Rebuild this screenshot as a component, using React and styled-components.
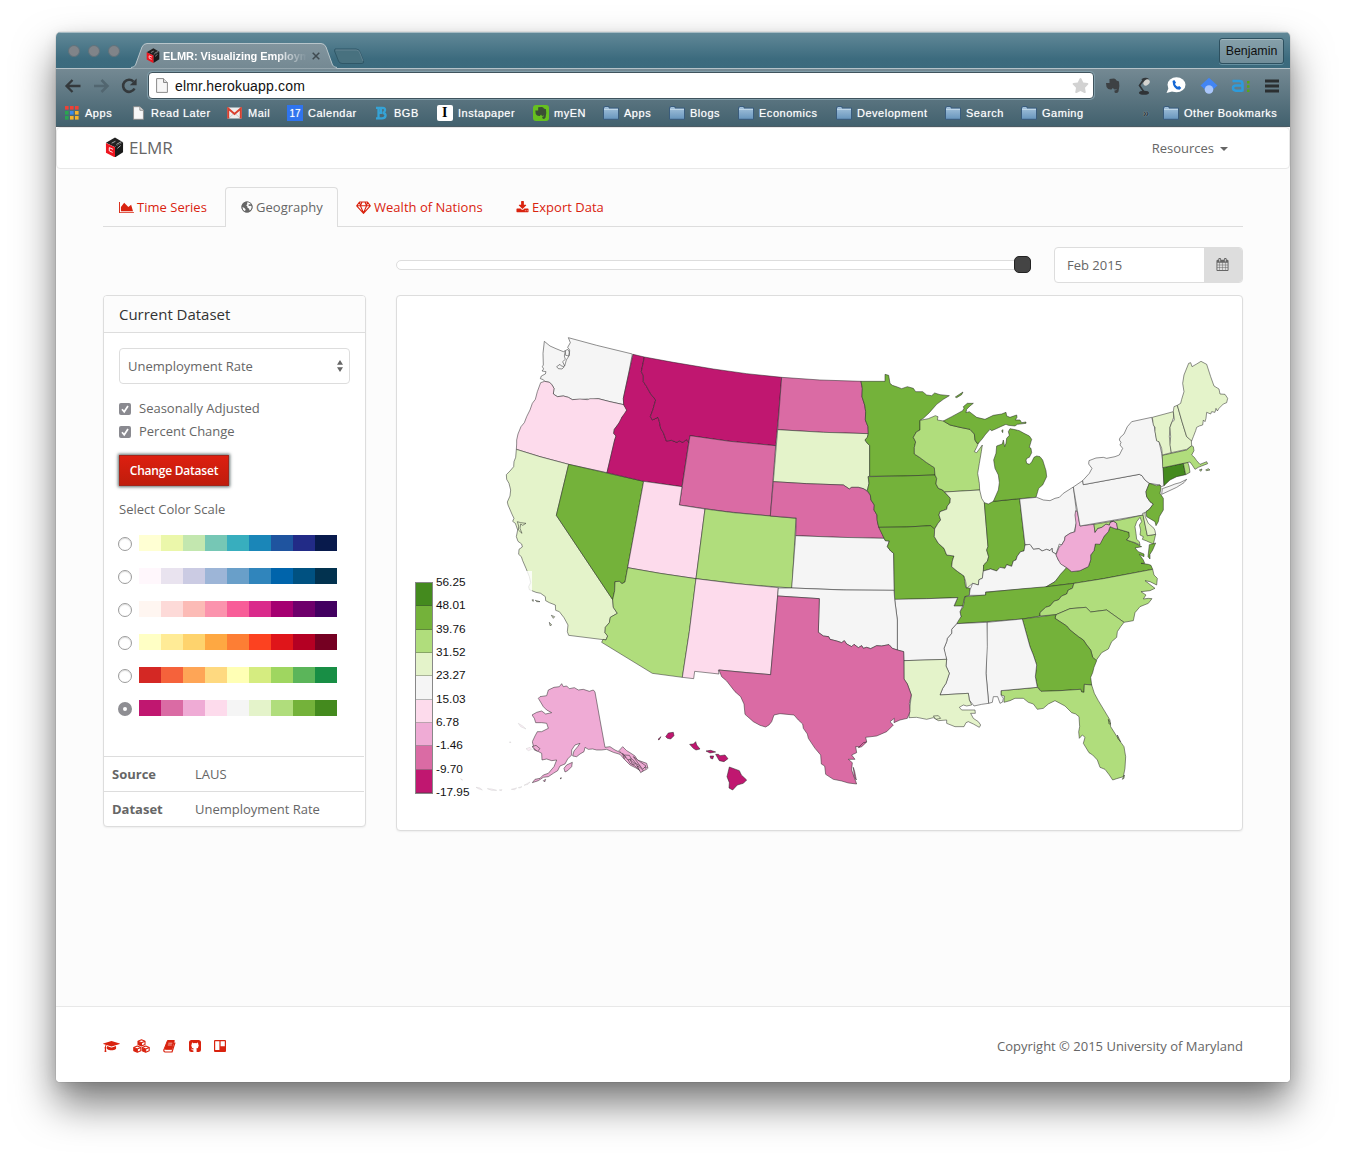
import React from "react";
import styled, { createGlobalStyle } from "styled-components";
import { FaStar } from "react-icons/fa";

const GlobalStyle = createGlobalStyle`
  *, *::before, *::after { box-sizing: border-box; }
  body { margin: 0; background: #fff; overflow: hidden; }
`;

const ui = `"Liberation Sans", Helvetica, Arial, sans-serif`;
const RED = "#d9230f";

/* ---------- window ---------- */
const Window = styled.div`
  width: 1234px;
  height: 1050px;
  margin: 32px 56px 80px;
  border-radius: 5px 5px 4px 4px;
  overflow: clip;
  display: flex;
  flex-direction: column;
  background: #fcfcfc;
  font: 13px/20px "Open Sans", "Noto Sans", sans-serif;
  color: #666;
`;
const Backdrop = styled.div`
  height: 1162px;
  overflow: hidden;
  ${Window} {
    box-shadow: 0 0 1px rgba(0, 0, 0, 0.6), 0 22px 40px rgba(0, 0, 0, 0.52), 0 4px 14px rgba(0, 0, 0, 0.1);
  }
`;
const TitleBar = styled.div`
  height: 36px;
  flex: none;
  display: flex;
  align-items: flex-end;
  padding: 0 6px 0 12px;
  background: linear-gradient(#628998, #3c6b7e 75%, #3b6a7d);
  box-shadow: inset 0 1px 0 #a7bcc4;
`;
const Lights = styled.div`
  display: flex;
  gap: 8px;
  width: 63px;
  padding-bottom: 11px;
`;
const Light = styled.span`
  width: 12px;
  height: 12px;
  border-radius: 50%;
  background: #808489;
  border: 1px solid #62727b;
`;
const Tab = styled.div`
  position: relative;
  width: 206px;
  height: 25px;
  display: flex;
  align-items: center;
  padding-left: 15px;
  font: bold 11px/14px ${ui};
  color: #fff;
`;
const TabShape = styled.svg`
  position: absolute;
  left: 0;
  top: 0;
`;
const TabTitle = styled.span`
  position: relative;
  width: 144px;
  margin-left: 3px;
  overflow: hidden;
  white-space: nowrap;
  letter-spacing: -0.05px;
  -webkit-mask-image: linear-gradient(90deg, #000 78%, transparent);
  mask-image: linear-gradient(90deg, #000 78%, transparent);
`;
const Over = styled.span`
  position: relative;
  display: flex;
`;
const NewTab = styled.svg`
  margin: 0 0 3px -5px;
`;
const Profile = styled.div`
  margin: 0 0 4px auto;
  width: 65px;
  height: 26px;
  border: 1px solid #2d505f;
  border-radius: 3px;
  background: linear-gradient(#86a0aa, #718e9a);
  box-shadow: inset 0 1px 0 #a3b8bf, 0 1px 0 #6590a1;
  color: #101010;
  text-align: center;
  font: 12.4px/25px ${ui};
`;
const Chrome = styled.div`
  height: 59px;
  flex: none;
  background: linear-gradient(#748993, #42616e);
  border-top: 1px solid #b5c2c8;
  border-bottom: 1px solid #4a5b64;
  display: flex;
  flex-direction: column;
`;
const Toolbar = styled.div`
  height: 31px;
  display: flex;
  align-items: center;
  padding: 3px 11px 0 8px;
`;
const NavIcons = styled.div`
  width: 84px;
  display: flex;
  gap: 8px;
`;
const UrlBox = styled.div`
  width: 946px;
  height: 27px;
  border: 1px solid #3f535d;
  border-radius: 4px;
  background: #fff;
  box-shadow: 0 0 0 1px #7f9ca8;
  display: flex;
  align-items: center;
  padding: 0 4px 0 7px;
  font: 14px/20px ${ui};
  color: #111;
  letter-spacing: 0.18px;
`;
const UrlText = styled.span`
  margin: 0 auto 0 7px;
`;
const Extensions = styled.div`
  flex: 1;
  display: flex;
  justify-content: space-between;
  align-items: center;
  padding-left: 11px;
`;
const Bookmarks = styled.div`
  display: flex;
  align-items: center;
  height: 27px;
  padding-left: 9px;
  font: 11px/14px ${ui};
  color: #fff;
  letter-spacing: 0.52px;
  text-shadow: 0 0 1px rgba(255, 255, 255, 0.6);
`;
const Bookmark = styled.div`
  width: ${(p) => p.$w}px;
  display: flex;
  align-items: center;
  white-space: nowrap;
`;
const BookmarkIcon = styled.span`
  width: ${(p) => p.$w}px;
  height: 17px;
  display: flex;
  align-items: center;
  flex: none;
`;
const More = styled.b`
  color: #2c3b42;
`;
const DayTile = styled.span`
  width: 16px;
  height: 16px;
  background: #2f74ee;
  color: #fff;
  text-align: center;
  font: 10px/18px ${ui};
  letter-spacing: 0;
`;
const InstaTile = styled.span`
  width: 16px;
  height: 16px;
  border-radius: 2px;
  background: #fff;
  color: #000;
  text-align: center;
  font: bold 14px/16px "Liberation Serif", serif;
  text-shadow: none;
`;

/* ---------- page ---------- */
const Navbar = styled.header`
  height: 42px;
  flex: none;
  display: flex;
  align-items: center;
  justify-content: space-between;
  padding: 0 61px 0 48px;
  background: #fff;
  border: 1px solid #e8e8e8;
  border-radius: 4px;
`;
const Brand = styled.div`
  display: flex;
  align-items: center;
  gap: 5px;
  font-size: 17px;
  letter-spacing: -0.1px;

  svg { margin-top: -2px; }
`;
const Dropdown = styled.div`
  display: flex;
  align-items: center;
  gap: 6px;
`;
const Caret = styled.span`
  margin-top: 1px;
  border: 4px solid transparent;
  border-top-color: #666;
  border-bottom: 0;
`;
const Main = styled.main`
  flex: 1;
  padding: 18px 47px 0;
`;
const Tabs = styled.nav`
  display: flex;
  height: 40px;
  border-bottom: 1px solid #ddd;
`;
const NavTab = styled.a`
  display: flex;
  align-items: center;
  gap: 3px;
  width: ${(p) => p.$w}px;
  height: ${(p) => (p.$active ? 40 : 39)}px;
  padding: 0 0 ${(p) => (p.$active ? 1 : 0)}px ${(p) => p.$pad}px;
  border: 1px solid ${(p) => (p.$active ? "#ddd" : "transparent")};
  border-bottom: 0;
  border-radius: 4px 4px 0 0;
  background: #fcfcfc;
  color: ${(p) => (p.$active ? "#666" : RED)};
  letter-spacing: 0.02px;
  white-space: nowrap;
`;
const Controls = styled.div`
  display: flex;
  align-items: center;
  justify-content: flex-end;
  height: 36px;
  margin: 20px 0 12px;
`;
const Track = styled.div`
  width: 635px;
  height: 10px;
  border: 1px solid #ddd;
  border-radius: 5px;
  background: #fff;
  display: flex;
  justify-content: flex-end;
  align-items: center;
  margin: 0 23px 1px 0;
`;
const Handle = styled.span`
  width: 17px;
  height: 17px;
  margin-right: -1px;
  border-radius: 5px;
  background: #444;
  border: 1px solid #222;
`;
const DateGroup = styled.div`
  display: flex;
  width: 189px;
  height: 36px;
  border: 1px solid #ddd;
  border-radius: 4px;
  background: #fff;
  overflow: hidden;
`;
const DateText = styled.div`
  flex: 1;
  padding: 7px 12px;
`;
const DateButton = styled.div`
  width: 38px;
  padding: 0 1px 2px 0;
  background: #ddd;
  display: flex;
  align-items: center;
  justify-content: center;
`;
const Columns = styled.div`
  display: flex;
  align-items: flex-start;
  gap: 30px;
`;
const Panel = styled.section`
  position: relative;
  width: ${(p) => p.$w}px;
  height: ${(p) => p.$h}px;
  border: 1px solid #ddd;
  border-radius: 4px;
  background: #fff;
  box-shadow: 0 1px 2px rgba(0, 0, 0, 0.06);
  overflow: hidden;
`;
const PanelHead = styled.h3`
  margin: 0;
  height: 37px;
  padding: 8px 15px;
  background: #fcfcfc;
  border-bottom: 1px solid #ddd;
  color: #333;
  font-weight: 400;
  font-size: 15px;
  letter-spacing: -0.02px;
`;
const PanelBody = styled.div`
  height: 423px;
  padding: 15px;
`;
const Select = styled.div`
  height: 36px;
  border: 1px solid #ddd;
  border-radius: 4px;
  display: flex;
  align-items: center;
  justify-content: space-between;
  padding: 0 5px 0 8px;
  margin-bottom: 12px;
`;
const Check = styled.div`
  height: 23px;
  display: flex;
  align-items: center;
  gap: 8px;

  svg { margin-top: 2px; }
`;
const Button = styled.button`
  display: block;
  width: 110px;
  height: 31px;
  margin: 13px 0 13px;
  padding: 0;
  border: 1px solid #a3251a;
  background: linear-gradient(#dd1f10, #bf1d0c);
  box-shadow: 0 0 3px 1px rgba(40, 60, 60, 0.75);
  color: #fff;
  font: 600 12px/26px "Open Sans", sans-serif;
  letter-spacing: -0.22px;
`;
const ScaleRow = styled.div`
  height: 33px;
  display: flex;
  align-items: center;
  gap: 7px;
  margin-left: -1px;
`;
const Scales = styled.div`
  margin-top: 8px;
`;
const Radio = styled.span`
  width: 14px;
  height: 14px;
  margin-top: 1px;
  border-radius: 50%;
  border: ${(p) => (p.$on ? "5px solid #8e8e93" : "1px solid #9c9c9c")};
  background: #fff;
  box-shadow: ${(p) => (p.$on ? "none" : "inset 0 1px 1px #ddd")};
`;
const Ramp = styled.div`
  display: grid;
  grid-template-columns: repeat(9, 22px);
  height: 16px;
  margin-top: -1px;
`;
const Swatch = styled.span`
  background: ${(p) => p.$c};
`;
const MetaRow = styled.div`
  height: 35px;
  margin-right: 1px;
  display: grid;
  grid-template-columns: 83px 1fr;
  padding: 7px 8px;
  border-top: 1px solid #ddd;
`;
const MetaKey = styled.b`
  font-weight: 700;
`;
const Legend = styled.div`
  position: absolute;
  left: 16px;
  top: 275px;
  width: 119px;
  height: 239px;
  padding: 11px 0 0 2px;
  display: flex;
  gap: 3px;
  background: rgba(255, 255, 255, 0.8);
`;
const LegendBar = styled.div`
  width: 18px;
  height: 212px;
  border: 1px solid #888;
  display: grid;
  grid-template-rows: repeat(9, 1fr);
`;
const LegendCell = styled.span`
  background: ${(p) => p.$c};
  border-bottom: 1px solid rgba(60, 60, 60, 0.35);
`;
const LegendLabels = styled.div`
  display: flex;
  flex-direction: column;
  justify-content: space-between;
  height: 223px;
  margin-top: -6px;
  font: 11.800px/13px ${ui};
  color: #111;
`;
const Footer = styled.footer`
  flex: none;
  height: 76px;
  border-top: 1px solid #e8e8e8;
  background: #fff;
  display: flex;
  align-items: center;
  justify-content: space-between;
  padding: 3px 47px 0;
`;
const Links = styled.div`
  display: flex;
  align-items: center;
  gap: 13px;
  color: ${RED};
`;

/* ---------- icons ---------- */
const Glyph = ({ w, h = 13, box, d }) => (
  <svg width={w} height={h} viewBox={box} fill="currentColor"><path d={d} /></svg>
);
const AreaChart = () => (
  <Glyph w={15} box="0 0 2048 1792" d="M2048 1536v128h-2048v-1536h128v1408h1920zm-384-1024l256 896h-1664v-576l448-576 576 576z" />
);
const Download = () => (
  <Glyph w={13} box="0 0 1792 1792" d="M1344 1344q0-26-19-45t-45-19-45 19-19 45 19 45 45 19 45-19 19-45zm256 0q0-26-19-45t-45-19-45 19-19 45 19 45 45 19 45-19 19-45zm128-224v320q0 40-28 68t-68 28h-1472q-40 0-68-28t-28-68v-320q0-40 28-68t68-28h465l135 136q58 56 136 56t136-56l136-136h464q40 0 68 28t28 68zm-325-569q17 41-14 70l-448 448q-18 19-45 19t-45-19l-448-448q-31-29-14-70 17-39 59-39h256v-448q0-26 19-45t45-19h256q26 0 45 19t19 45v448h256q42 0 59 39z" />
);
const GradCap = () => (
  <Glyph w={17} box="0 0 2304 1792" d="M1774 836l18 316q4 69-82 128t-235 93.500-323 34.500-323-34.500-235-93.500-82-128l18-316 574 181q22 7 48 7t48-7zm530-324q0 23-22 31l-1120 352q-4 1-10 1t-10-1l-652-206q-43 34-71 111.500t-34 178.500q63 36 63 109 0 69-58 107l58 433q2 14-8 25-9 11-24 11h-192q-15 0-24-11-10-11-8-25l58-433q-58-38-58-107 0-73 65-111 11-207 98-330l-333-104q-22-8-22-31t22-31l1120-352q4-1 10-1t10 1l1120 352q22 8 22 31z" />
);
const Calendar = () => (
  <Glyph w={13} box="0 0 1792 1792" d="M192 1664h288v-288h-288v288zm352 0h320v-288h-320v288zm-352-352h288v-320h-288v320zm352 0h320v-320h-320v320zm-352-384h288v-288h-288v288zm736 736h320v-288h-320v288zm-384-736h320v-288h-320v288zm768 736h288v-288h-288v288zm-384-352h320v-320h-320v320zm-352-864v-288q0-13-9.500-22.500t-22.500-9.500h-64q-13 0-22.500 9.500t-9.500 22.500v288q0 13 9.500 22.500t22.500 9.500h64q13 0 22.500-9.500t9.500-22.500zm736 864h288v-320h-288v320zm-384-384h320v-288h-320v288zm384 0h288v-288h-288v288zm32-480v-288q0-13-9.500-22.500t-22.500-9.500h-64q-13 0-22.500 9.500t-9.500 22.500v288q0 13 9.500 22.500t22.500 9.500h64q13 0 22.500-9.500t9.500-22.500zm384-64v1280q0 52-38 90t-90 38h-1408q-52 0-90-38t-38-90v-1280q0-52 38-90t90-38h128v-96q0-66 47-113t113-47h64q66 0 113 47t47 113v96h384v-96q0-66 47-113t113-47h64q66 0 113 47t47 113v96h128q52 0 90 38t38 90z" />
);
const Globe = () => (
  <svg width="12" height="12" viewBox="0 0 12 12">
    <circle cx="6" cy="6" r="5.500" fill="#666" />
    <path d="M6 1.200 7.500 .9 9.800 2.300 9.500 3.500 8 3.200 7.200 4.200 8.500 5 10.200 4.800 11 6 10 8.500 8.600 9.600 8 7.500 6.500 6.800 6.300 5.200 5.200 4.300 6.300 3.200Z" fill="#fcfcfc" />
    <path d="M1.200 6 3 6.800 4.600 8.200 4 10.300 2.200 9Z" fill="#fcfcfc" />
    <circle cx="6" cy="6" r="5.200" fill="none" stroke="#666" strokeWidth=".8" />
  </svg>
);
const Diamond = () => (
  <svg width="15" height="13" viewBox="0 0 15 13" fill="none" stroke={RED} strokeWidth="1.100" strokeLinejoin="round">
    <path d="M3.500 1h8L14.300 4.800 7.500 12.300.7 4.800ZM.7 4.800h13.600M7.500 12 4.400 4.800 6 1M7.500 12l3.100-7.200L9 1M3.300 1.200l1.300 3.400M11.700 1.200l-1.300 3.400" />
  </svg>
);
const Cubes = () => (
  <svg width="17" height="14" viewBox="0 0 17 14" stroke={RED} strokeWidth="1.100" strokeLinejoin="round">
    {[[8.500, 0.7], [4.300, 7], [12.700, 7]].map(([x, y]) => (
      <g key={x} transform={`translate(${x} ${y})`}>
        <path d="M0 0 3.500 1.500V4.700L0 6.300-3.500 4.700V1.500Z" fill="#fff" />
        <path d="M-3.500 1.800 0 3.300V6.300L-3.500 4.700Z" fill={RED} stroke="none" />
        <path d="M-3.500 1.500 0 3 3.500 1.500M0 3V6" fill="none" />
      </g>
    ))}
  </svg>
);
const Book = () => (
  <svg width="13" height="13" viewBox="0 0 13 13">
    <path d="M4.500.5h6.800L8.900 9.300H2.400Q.9 9.500 1.300 8.600Z" fill={RED} stroke={RED} strokeLinejoin="round" />
    <path d="M1 9.200Q.3 12 2.300 12H9L12 2.500" fill="none" stroke={RED} strokeWidth="1.200" strokeLinejoin="round" />
    <path d="M5.300 3.200h4M4.800 5h4" stroke="#fff" strokeWidth=".6" />
  </svg>
);
const GithubSquare = () => (
  <svg width="12" height="12" viewBox="0 0 12 12">
    <path d="M2.500 0H9.500Q12 0 12 2.500V9.500Q12 12 9.500 12H7.600V9.700Q7.600 8.900 7.200 8.600 9.700 8.200 9.700 5.600 9.700 4.700 9.100 4.100 9.300 3.200 9 2.600 8.300 2.600 7.500 3.200 6 2.900 4.500 3.200 3.700 2.600 3 2.600 2.700 3.200 2.900 4.100 2.300 4.700 2.300 5.600 2.300 8.200 4.800 8.600 4.500 8.900 4.400 9.400 3.300 9.700 2.700 8.800L2 8.600Q3 10.700 4.400 10.500V12H2.500Q0 12 0 9.500V2.500Q0 0 2.500 0Z" fill={RED} />
  </svg>
);
const Trello = () => (
  <svg width="12" height="12" viewBox="0 0 12 12">
    <rect width="12" height="12" rx="1" fill={RED} />
    <path d="M1.200 1.200H5.400V10H1.200ZM6.600 1.200h4.200v5H6.600Z" fill="#fff" />
  </svg>
);
const Cube = ({ s }) => (
  <svg width={s} height={s * 1.1} viewBox="0 0 20 22">
    <path d="M10.500.5 19 5.500 10 10.500 1 6Z" fill="#222" />
    <path d="M19 5.500V16L10.500 21.500V10.300Z" fill="#1a1a1a" />
    <path d="M1 6.200 10.500 10.700V21.500L1 16.500Z" fill="#ee1620" />
    <path d="M7 6.500 11 4.500M12 7.800 17.500 4.800M13 12 16.500 9" stroke="#bbb" strokeWidth=".9" fill="none" />
    <path d="M8.500 13 4.500 11.200V14.500L8 16.200" stroke="#fff" strokeWidth="1" fill="none" />
  </svg>
);
const PageIcon = ({ w = 12, h = 15 }) => (
  <svg width={w} height={h} viewBox="0 0 12 15">
    <path d="M.6.600H7.500L11.400 4.500V14.400H.6Z" fill="#f7f7f7" stroke="#8b8b8b" />
    <path d="M7.500.600V4.500H11.400" fill="#ddd" stroke="#8b8b8b" />
  </svg>
);
const Folder = () => (
  <svg width="16" height="14" viewBox="0 0 16 14">
    <defs>
      <linearGradient id="folder" x2="0" y2="1"><stop stopColor="#a6c4dc" /><stop offset="1" stopColor="#6795bd" /></linearGradient>
    </defs>
    <path d="M.5 13.300V1.200H1.500V.5H6V2H15.500V13.300Z" fill="url(#folder)" stroke="#3a5c7c" />
    <path d="M1 3.500H15" stroke="#bdd5e6" />
  </svg>
);
const AppsGrid = () => (
  <svg width="14" height="14" viewBox="0 0 14 14">
    {["#ef4136", "#ef4136", "#ef4136", "#2aa551", "#3b8bea", "#f6b42c", "#2aa551", "#f6b42c", "#f6b42c"].map((c, i) => (
      <rect key={i} x={(i % 3) * 5} y={Math.floor(i / 3) * 5} width="3.600" height="3.600" fill={c} />
    ))}
  </svg>
);
const Gmail = () => (
  <svg width="15" height="12" viewBox="0 0 15 12">
    <rect x=".5" y=".5" width="14" height="11" fill="#eee" />
    <path d="M2 11 7.500 6 13 11" stroke="#ccc" fill="none" />
    <path d="M1.200 11.500V1.500L7.500 7 13.800 1.500V11.500" stroke="#d9402f" strokeWidth="2" fill="none" />
  </svg>
);
const BIcon = () => (
  <svg width="13" height="14" viewBox="0 0 13 14">
    <path d="M1 1.800H7.500Q10.500 2 10 4.500 9.700 6.300 7.800 6.800 11 7.500 10.500 10 10 12.300 7 12.300H1M3.500 2V12M6 1.500V6.800H3.500" fill="none" stroke="#35a3d6" strokeWidth="2.300" />
  </svg>
);
const elephant = "M4.500 1 9 .5Q11 1 11.500 2.500L14 3.500Q15 8 13.500 13.500 12.500 15.500 10.500 15 9 14.500 9.500 12.500L11.500 12V11Q8.500 12.500 8 9.800L6.500 11.500Q3 12 1.500 9L1 5H4.500Z";
const Evernote = () => (
  <svg width="16" height="16" viewBox="0 0 16 16">
    <rect width="16" height="16" rx="3" fill="#66c01f" />
    <path d={elephant} fill="#3b4e35" transform="translate(1.500 1.500) scale(.82)" />
  </svg>
);

/* ---------- map ---------- */
const T = ["#c01770", "#da6ba4", "#efabd5", "#fddbec", "#f5f5f5", "#e4f3ca", "#b0dd7c", "#74b23a", "#448a1e"];
// Each sheet is a third-pixel grid anchored at a corner of the drawing.
const SHEETS = { west: [500, 320], mid: [780, 360], east: [1020, 340], south: [700, 580], outer: [400, 560] };
const STATES = [
  ["west", 4, "205,53 290,76 397,102 388,150 370,235 371,254 330,245 295,236 270,240 262,237 240,239 217,239 205,232 190,228 172,230 160,222 162,205 155,193 148,187 134,184 130,179 121,176 124,168 136,162 138,155 126,153 131,147 127,140 130,135 129,100 133,64 150,78 168,86 190,95 196,92 193,108 196,118 188,125 194,138 199,120 208,106 209,90 203,82 211,68"],
  ["west", 4, "170,140 180,133 184,138 193,140 186,147 175,146"],
  ["west", 4, "196,92 203,88 208,96 206,108 197,106"],
  ["west", 3, "122,188 134,184 148,187 155,193 162,205 160,222 172,230 190,228 205,232 217,239 240,237 262,239 270,236 295,236 330,245 371,254 380,268 377,283 366,291 363,303 355,312 343,328 341,340 348,348 344,360 321,458 206,433 120,410 49,388 50,372 50,360 54,342 63,320 73,308 80,290 90,270 97,250 106,238 112,215"],
  ["west", 5, "49,388 120,410 206,433 169,586 338,839 340,862 352,880 331,892 328,908 316,922 315,938 323,948 318,960 206,946 202,935 204,915 192,893 178,875 167,871 166,855 148,848 137,842 136,830 122,820 108,817 88,809 86,800 92,788 88,770 78,745 68,722 64,710 56,703 57,688 67,681 65,672 54,664 49,650 53,630 46,610 38,604 42,595 37,585 24,555 22,546 30,528 32,510 27,490 20,478 19,464 30,453 41,440 42,425 47,412"],
  ["west", 5, "52,605 62,608 78,610 68,616 62,612 60,625 66,640 55,630 56,618"],
  ["outer", 5, "394,120 400,119 400,124"], ["outer", 5, "406,121 420,125 410,125"], ["outer", 5, "454,166 464,170 460,175"], ["outer", 5, "448,187 455,195 450,197"],
  ["west", 7, "206,433 320,459 431,484 383,743 375,786 366,791 358,784 345,785 344,812 338,839 169,586"],
  ["west", 0, "399,103 433,111 424,155 430,167 430,185 440,200 451,220 467,240 459,268 451,290 457,300 474,292 478,305 482,325 490,338 499,363 515,361 530,367 538,363 548,367 560,359 566,368 546,500 431,484 321,458 344,360 348,348 341,340 343,328 355,312 366,291 380,271 371,254 370,235"],
  ["west", 0, "433,111 520,127 640,147 740,161 845,172 837,270 827,377 690,364 570,347 566,368 560,359 548,367 538,363 530,367 515,361 499,363 490,338 482,325 478,305 474,292 457,300 451,290 459,268 467,240 451,220 440,200 430,185 430,167 424,155"],
  ["west", 1, "570,347 690,364 827,377 811,588 680,575 538,555"],
  ["west", 3, "431,484 546,500 538,555 615,567 588,776 480,760 383,743"],
  ["west", 6, "615,567 700,578 811,588 888,595 876,804 740,794 588,776"],
  ["west", 6, "383,743 480,760 588,776 568,935 547,1072 457,1060 305,967 309,958 318,960 323,948 315,938 316,922 328,908 331,892 352,880 340,862 338,839 344,812 345,785 358,784 366,791 375,786"],
  ["west", 3, "588,776 700,790 835,803 812,1064 655,1050 657,1062 584,1054 581,1076 547,1072 568,935"],
  ["mid", 1, "5,52 120,60 243,64 247,85 246,110 254,135 257,155 256,180 264,200 265,221 130,217 -7,209"],
  ["mid", 5, "-7,209 130,217 265,221 262,232 255,240 262,250 269,256 269,348 264,350 267,370 262,392 250,386 235,382 215,382 208,387 190,375 80,371 -20,365"],
  ["mid", 1, "-20,365 80,371 190,375 208,387 215,382 235,382 250,386 262,394 271,405 273,420 283,435 282,450 291,465 293,490 302,510 312,535 180,532 47,527 49,474 -29,468"],
  ["mid", 4, "47,527 180,532 312,535 316,542 328,543 322,560 332,573 341,580 343,691 200,690 35,684"],
  ["mid", 7, "243,64 315,64 315,43 326,46 330,70 337,76 352,81 365,86 382,80 400,85 407,95 428,95 440,105 455,107 464,99 480,104 508,107 490,118 470,133 448,158 430,175 420,181 420,210 409,216 400,232 407,246 403,262 403,282 420,293 440,308 463,323 465,345 370,348 269,349 269,256 262,250 255,240 262,232 265,221 264,200 256,180 257,155 254,135 246,110 247,85"],
  ["mid", 7, "526,111 549,96 545,104 530,113"],
  ["mid", 7, "265,350 370,348 465,345 470,355 468,372 475,385 488,390 494,397 511,415 510,428 502,438 500,448 480,455 477,465 482,480 474,490 468,500 462,507 452,497 380,501 296,502 291,480 291,465 282,450 283,435 273,420 271,405 262,392 267,370"],
  ["mid", 7, "296,502 380,501 452,497 464,507 463,530 475,550 492,565 500,585 522,588 517,603 515,620 532,634 552,648 557,682 570,685 568,706 554,710 548,738 522,740 527,728 533,713 440,716 344,719 343,691 341,580 332,573 322,560 328,543 316,542"],
  ["mid", 6, "420,181 445,176 466,167 474,170 472,180 490,183 510,195 540,202 570,208 583,222 585,240 591,250 597,245 590,262 583,275 590,278 607,255 604,275 598,310 593,340 598,370 599,390 494,396 488,390 475,385 468,372 470,355 465,345 463,323 440,308 420,293 403,282 403,262 407,246 400,232 409,216 420,210"],
  ["mid", 5, "494,396 599,390 605,415 613,428 619,500 624,560 620,570 626,590 622,604 611,615 610,635 607,655 597,659 595,675 578,670 560,685 557,665 552,648 532,634 515,620 517,603 522,588 500,585 492,565 475,550 463,530 464,507 474,490 482,480 477,465 480,455 500,448 502,438 510,428 511,415"],
  ["mid", 7, "613,428 625,432 640,424 719,416 735,557 732,573 722,575 712,588 708,600 700,603 695,619 680,614 675,625 660,622 650,633 632,627 610,633 611,615 622,604 626,590 620,570 624,560 619,500"],
  ["mid", 7, "640,424 719,416 768,412 776,385 788,375 800,350 798,332 788,300 780,290 770,288 762,292 755,306 748,313 740,310 738,300 742,294 748,292 755,278 753,265 748,262 755,238 748,228 732,220 718,212 700,208 690,206 685,215 688,226 680,235 678,250 674,260 670,240 667,252 650,258 648,280 641,300 645,325 655,345 658,368 655,390"],
  ["mid", 7, "490,183 515,170 548,152 552,145 550,140 562,130 580,130 570,138 560,148 558,158 568,155 590,172 615,178 640,166 665,162 678,157 680,168 690,172 710,165 711,172 706,180 720,180 725,188 738,186 738,190 712,193 705,198 685,196 678,193 662,200 645,208 635,212 630,208 615,225 608,235 595,250 591,250 585,240 583,222 570,208 540,202 510,195"],
  ["mid", 7, "665,212 669,209 668,218"],
  ["east", 4, "-1,477 50,472 70,480 90,482 105,475 118,472 130,460 160,441 169,512 170,545 165,565 162,577 150,580 135,590 134,600 125,615 118,612 108,642 97,636 96,625 90,632 80,628 68,633 57,626 40,628 33,617 15,613"],
  ["mid", 4, "735,555 750,553 760,568 777,566 786,573 800,568 810,572 816,565 817,576 828,582 835,600 848,615 860,623 843,645 825,665 797,682 617,696 617,706 568,706 570,690 578,670 595,675 597,659 607,655 610,633 632,627 650,633 660,622 675,625 680,614 695,619 700,603 708,600 712,588 722,575 732,573"],
  ["east", 7, "77,741 105,725 122,702 140,683 155,695 180,692 205,680 212,660 212,645 222,632 226,612 240,605 253,588 265,575 270,560 285,566 293,567 303,570 327,577 328,590 320,600 335,605 350,612 365,620 345,624 355,635 372,642 372,650 358,643 370,660 374,670 363,670 385,673 393,676 398,688 250,716 162,730"],
  ["east", 7, "388,614 407,609 398,630 390,643 390,657 384,650"],
  ["east", 2, "167,512 172,515 180,558 222,553 225,577 233,565 245,562 258,552 268,555 270,547 280,543 290,550 293,567 285,566 270,560 265,575 253,588 240,613 226,612 222,632 212,645 212,660 205,680 180,692 155,695 140,683 122,672 115,660 108,645 118,620 125,615 134,600 135,590 150,580 165,575 168,550 165,525"],
  ["east", 4, "160,441 188,422 190,434 358,403 366,407 375,420 388,430 378,455 380,470 390,485 400,492 388,508 378,515 370,525 180,558"],
  ["east", 4, "188,422 208,400 216,385 206,372 207,362 228,354 250,352 260,355 285,350 298,345 308,325 300,315 303,307 298,300 300,293 312,282 322,260 335,245 395,232 403,260 410,300 417,305 425,340 430,380 432,437 424,440 420,435 388,430 375,420 366,407 358,403 190,434"],
  ["east", 4, "427,446 450,438 465,432 480,428 500,418 492,428 470,442 425,463"],
  ["east", 7, "388,430 410,437 420,435 423,445 420,460 430,475 430,510 418,530 415,545 408,557 405,545 380,530 378,515 388,508 400,492 390,485 380,470 378,455"],
  ["east", 8, "429,383 490,370 497,404 470,410 450,420 432,437"],
  ["east", 6, "490,370 503,367 507,378 510,397 497,404"],
  ["east", 6, "427,346 500,330 515,317 520,320 522,332 515,345 523,352 530,362 540,373 560,365 563,371 545,378 535,382 525,388 518,377 510,366 490,370 428,383"],
  ["east", 6, "538,390 546,387 543,394"], ["east", 6, "557,390 565,386 570,390 560,392"],
  ["east", 5, "397,232 460,215 461,232 455,248 450,262 448,290 454,338 427,345 425,325 417,305 410,303 405,275 405,262 400,255"],
  ["east", 5, "460,215 462,200 472,196 486,245 500,290 514,300 515,317 500,328 454,338 450,315 452,290 450,262 455,248 463,240"],
  ["east", 5, "472,196 482,190 485,178 492,155 488,130 492,105 506,70 512,68 516,80 530,72 543,64 560,73 572,110 582,138 597,147 600,162 615,163 623,175 620,188 610,192 597,205 592,213 588,205 585,217 575,215 572,222 560,217 558,235 555,245 550,240 548,255 538,258 530,262 527,272 520,290 515,303 500,290 486,245"],
  ["east", 6, "222,553 300,540 370,525 382,587 407,583 403,600 400,612 380,603 367,598 370,590 360,585 362,570 358,555 365,545 360,532 350,545 345,560 348,580 350,598 358,605 360,615 345,608 335,605 320,600 328,590 327,577 303,570 293,567 290,550 280,543 270,547 268,555 258,552 245,562 233,565 225,577"],
  ["east", 5, "368,520 375,518 376,530 385,550 402,565 405,572 407,583 382,587"],
  ["south", 7, "795,50 857,45 857,37 960,27 1040,20 1122,10 1117,25 1105,30 1100,42 1085,48 1075,60 1063,63 1050,78 1037,82 1020,98 1020,108 967,117 860,125 770,131 775,118 783,110 780,95 790,80"],
  ["south", 6, "1122,10 1210,-4 1358,-32 1362,-15 1372,-5 1370,15 1350,5 1335,2 1365,25 1350,32 1323,35 1338,45 1330,57 1345,55 1356,56 1345,70 1320,80 1305,98 1300,122 1272,127 1220,90 1172,96 1158,82 1110,86 1068,104 1020,108 1020,98 1037,82 1050,78 1063,63 1075,60 1085,48 1100,42 1105,30 1117,25"],
  ["south", 6, "1068,104 1110,86 1158,82 1172,96 1220,90 1272,127 1262,140 1252,155 1250,172 1235,185 1225,207 1205,218 1188,242 1178,232 1172,210 1160,195 1150,180 1135,170 1110,150 1100,138 1080,125 1065,115"],
  ["south", 7, "967,117 1068,104 1065,115 1080,125 1100,138 1110,150 1135,170 1150,180 1160,195 1172,210 1178,232 1190,242 1182,262 1178,278 1172,292 1175,315 1153,313 1152,337 1145,336 1142,328 1080,332 1023,334 1012,320 1006,290 1010,255 1000,225 990,200"],
  ["south", 6, "1012,322 1023,334 1080,332 1142,328 1145,336 1152,337 1153,313 1175,315 1183,340 1195,362 1230,420 1232,440 1256,478 1272,500 1277,530 1275,565 1270,590 1250,596 1238,600 1228,585 1215,568 1200,562 1192,540 1178,525 1167,518 1150,490 1155,472 1147,465 1138,475 1136,455 1139,440 1137,410 1127,402 1115,398 1095,378 1065,362 1045,372 1030,385 1012,388 1000,372 985,367 970,355 945,355 930,362 912,367 913,348 903,345 903,332"],
  ["south", 6, "1225,418 1232,432 1227,432"], ["south", 6, "1252,465 1262,485 1255,478"], ["south", 6, "1267,598 1273,585 1272,595"],
  ["south", 4, "861,127 967,117 990,200 1000,225 1010,255 1006,290 1012,322 903,332 903,345 910,355 908,366 900,370 893,350 880,350 877,367 866,370 858,280"],
  ["south", 4, "770,131 861,127 862,200 858,280 866,370 845,373 822,378 808,360 805,340 720,345 728,325 738,310 748,280 738,258 740,238 735,222 732,205 740,185 742,175 755,160 755,148"],
  ["south", 4, "584,58 680,56 773,53 762,78 788,78 780,95 783,110 770,131 755,148 755,160 742,175 740,185 732,205 740,238 612,242 611,215 592,210 592,120"],
  ["south", 5, "612,242 740,238 738,258 748,280 738,310 728,325 720,345 805,340 808,360 815,375 800,378 790,375 778,382 785,390 805,390 825,390 826,400 812,400 820,415 835,425 842,435 838,442 820,432 805,425 798,428 792,440 765,440 740,430 740,420 715,422 700,413 680,418 650,412 627,413 630,380 634,345 622,312 612,297"],
  ["south", 5, "700,408 715,407 722,415 708,418"],
  ["south", 4, "235,24 275,24 430,30 582,31 584,58 592,120 592,210 577,205 567,194 545,198 530,197 512,206 500,202 490,205 485,197 475,203 462,193 455,200 440,192 433,182 425,188 410,183 390,178 386,170 370,168 355,157 358,56 233,48"],
  ["south", 1, "233,48 358,56 355,157 370,168 386,170 390,178 410,183 425,188 433,182 440,192 455,200 462,193 475,203 485,197 490,205 500,202 512,206 530,197 545,198 567,194 577,205 592,210 611,215 612,297 622,312 634,345 628,370 630,395 622,415 600,420 582,428 583,415 570,425 580,435 560,455 530,468 497,472 500,485 480,500 467,500 470,518 455,525 465,538 445,538 457,548 455,570 462,590 470,612 445,609 425,603 400,598 377,583 374,558 364,552 362,525 345,505 325,475 322,462 310,445 308,432 295,420 282,405 240,401 222,405 215,425 207,435 197,441 180,436 160,425 135,403 132,372 122,350 105,335 80,303 65,290 57,270 140,278 212,284"],
  ["south", 1, "460,562 464,575 469,600 463,590"], ["south", 1, "475,503 490,488 500,486 485,500"],
  ["outer", 2, "485,371 490,380 500,378 508,386 523,383 535,390 550,388 568,394 580,390 585,396 600,480 615,562 630,560 645,570 660,577 680,585 695,600 718,612 730,618 740,628 725,635 708,624 690,615 675,600 660,583 640,577 620,568 605,570 590,570 578,567 565,568 555,562 552,575 540,582 530,590 518,588 522,573 533,560 540,550 525,555 515,570 515,585 503,597 495,612 480,618 473,632 460,640 445,650 430,652 415,662 397,668 405,658 420,655 430,645 445,640 462,620 470,600 455,602 440,597 426,600 425,580 412,573 403,570 397,545 405,528 412,515 425,515 445,505 440,490 425,488 407,488 403,475 396,465 410,457 425,453 437,462 455,458 440,450 430,440 415,415 420,410 440,407 445,390 462,382 478,380"],
  ["outer", 2, "657,572 668,560 680,572 690,578 705,588 712,600 740,610 744,625 730,620 715,615 700,605 690,600 675,590"],
  ["outer", 2, "680,590 700,600 720,632 705,618 690,610"], ["outer", 2, "700,590 716,612 728,628 738,618 720,605"], ["outer", 2, "672,585 684,600 694,596 688,586"],
  ["outer", 2, "668,580 676,592 672,596"], ["outer", 2, "690,598 704,612 698,614"], ["outer", 2, "712,618 722,638 730,632 720,622"], ["outer", 2, "396,560 408,556 420,566 412,574"],
  ["outer", 2, "492,625 500,615 517,607 515,620 503,632 495,636"], ["outer", 2, "480,655 484,653 483,657"], ["outer", 2, "430,662 437,658 434,666"],
  ["outer", 2, "355,490 368,498 378,507 362,500"], ["outer", 2, "378,566 390,562 395,568 385,572"], ["outer", 2, "328,546 333,546 331,549"],
  ["outer", 2, "355,683 366,680 360,684"], ["outer", 2, "334,688 350,684 344,689"], ["outer", 2, "372,676 390,666 384,673"], ["outer", 2, "228,682 240,684 247,690 235,686"], ["outer", 2, "262,686 275,687 290,691 275,691"], ["outer", 2, "298,690 306,689 304,692"], ["outer", 2, "182,656 188,660 185,660"],
  ["outer", 0, "797,530 805,519 820,517 822,527 812,537 802,535"], ["outer", 0, "774,538 783,530 777,540"],
  ["outer", 0, "869,553 880,552 887,545 890,555 900,567 888,570 880,565"], ["outer", 0, "918,573 932,571 947,576 930,579"],
  ["outer", 0, "930,588 941,588 938,597 932,595"], ["outer", 0, "947,583 955,583 960,587 975,585 984,596 972,605 958,602 952,592"],
  ["outer", 0, "988,621 1018,632 1024,645 1040,660 1030,670 1012,675 998,690 987,684 988,668 981,650"],
];
const MapSvg = () => (
  <svg width="845" height="534" viewBox="397 296 845 534" style={{ display: "block" }}>
    {STATES.map(([sheet, tone, pts], i) => (
      <polygon
        key={i}
        transform={`translate(${SHEETS[sheet].join(" ")}) scale(.333333)`}
        points={pts}
        fill={T[tone]}
        stroke="#222"
        strokeOpacity=".6"
        strokeWidth="2.500"
        strokeLinejoin="round"
      />
    ))}
  </svg>
);

/* ---------- data ---------- */
const BOOKMARKS = [
  ["Apps", 68, 20, <AppsGrid />],
  ["Read Later", 94, 18, <PageIcon w={11} h={14} />],
  ["Mail", 60, 21, <Gmail />],
  ["Calendar", 88, 21, <DayTile>17</DayTile>],
  ["BGB", 62, 19, <BIcon />],
  ["Instapaper", 96, 21, <InstaTile>I</InstaTile>],
  ["myEN", 70, 21, <Evernote />],
  ["Apps", 66, 21, <Folder />],
  ["Blogs", 69, 21, <Folder />],
  ["Economics", 98, 21, <Folder />],
  ["Development", 109, 21, <Folder />],
  ["Search", 76, 21, <Folder />],
  ["Gaming", 122, 21, <Folder />],
  ["", 20, 20, <More>»</More>],
  ["Other Bookmarks", 125, 21, <Folder />],
];
const RAMPS = [
  ["#ffffd3", "#ebf7aa", "#c3e7af", "#76c7b5", "#38aebe", "#1a86b8", "#1f549f", "#222b87", "#081a4c"],
  ["#fff7fc", "#e9e3ef", "#cbcbe3", "#9db5d7", "#699fc9", "#3085bc", "#0064ab", "#005181", "#02324f"],
  ["#fff6f1", "#fddad8", "#fcbbb6", "#fb93ad", "#f85d98", "#da2b8b", "#a50071", "#6e006b", "#420060"],
  ["#ffffc5", "#ffeb96", "#fed36d", "#fea842", "#fd7e34", "#fc4220", "#df151a", "#b40023", "#750022"],
  ["#d42824", "#f5623b", "#fea556", "#fed980", "#ffffb5", "#d5ec80", "#9fd660", "#5bb55a", "#188e45"],
  T,
];
const LEVELS = ["56.25", "48.01", "39.76", "31.52", "23.27", "15.03", "6.78", "-1.46", "-9.70", "-17.95"];

const CheckMark = () => (
  <svg width="12" height="12" viewBox="0 0 12 12">
    <rect width="12" height="12" rx="2" fill="#8a8a90" />
    <path d="M3 6.300 5.200 8.800 9 3" fill="none" stroke="#fff" strokeWidth="1.700" />
  </svg>
);

function BrowserChrome() {
  return (
    <>
      <TitleBar>
        <Lights><Light /><Light /><Light /></Lights>
        <Tab>
          <TabShape width="206" height="26" viewBox="0 0 206 26">
            <defs><linearGradient id="tab" x2="0" y2="1"><stop stopColor="#82959e" /><stop offset="1" stopColor="#748993" /></linearGradient></defs>
            <path d="M0 25.500Q3 25 4.500 22L11 4Q12.500 .5 16 .5H190Q193.500 .5 195 4L201.500 22Q203 25 206 25.500Z" fill="url(#tab)" />
            <path d="M0 24.500Q3 24.500 4.500 22L11 4Q12.500 .5 16 .5H190Q193.500 .5 195 4L201.500 22Q203 24.500 206 24.500" fill="none" stroke="#b8c5ca" />
          </TabShape>
          <Over><Cube s={14} /></Over>
          <TabTitle>ELMR: Visualizing Employment</TabTitle>
          <Over>
            <svg width="8" height="8" viewBox="0 0 8 8" stroke="#3f4a50" strokeWidth="1.500" style={{ marginLeft: 5 }}><path d="M.7.700 7.300 7.300M7.300.700.7 7.300" /></svg>
          </Over>
        </Tab>
        <NewTab width="34" height="17" viewBox="0 0 34 17">
          <path d="M3 1H24Q27 1 28 4L31.500 13Q32 15.500 30 15.500H10Q7.500 15.500 6.500 13L2.500 3Z" fill="#48717f" stroke="#2f5767" />
          <path d="M3.500 2H24.500Q26.500 2 27.500 4L31 13" fill="none" stroke="#7896a2" strokeWidth=".6" />
        </NewTab>
        <Profile>Benjamin</Profile>
      </TitleBar>
      <Chrome>
        <Toolbar>
          <NavIcons>
            <svg width="20" height="20" viewBox="0 0 20 20" fill="none" stroke="#34393c" strokeWidth="2.300"><path d="M16.500 10H2.500M8.500 4 2.500 10 8.500 16" /></svg>
            <svg width="20" height="20" viewBox="0 0 20 20" fill="none" stroke="#526670" strokeWidth="2.500"><path d="M2 10H15.500M9.500 4 15.500 10 9.500 16" /></svg>
            <svg width="20" height="20" viewBox="0 0 20 20"><path d="M14.500 12.500A6 6 0 1 1 13.500 5.700" fill="none" stroke="#34393c" strokeWidth="2.600" /><path d="M16.600 2.500V9.200H9.800Z" fill="#34393c" /></svg>
          </NavIcons>
          <UrlBox>
            <PageIcon />
            <UrlText>elmr.herokuapp.com</UrlText>
            <FaStar size={17} color="#d2d2d2" />
          </UrlBox>
          <Extensions>
            <svg width="16" height="16" viewBox="0 0 16 16"><path d={elephant} fill="#3d4144" /></svg>
            <svg width="18" height="18" viewBox="0 0 18 18"><path d="M8 3.500 4.500 8.500 9 15" fill="none" stroke="#2f3336" strokeWidth="1.600" /><path d="M6.500 2Q11-.5 14 2L8.500 7.500Z" fill="#33383b" /><ellipse cx="11.500" cy="5.500" rx="3.600" ry="2.600" fill="#d4d4d0" transform="rotate(-40 11.500 5.500)" /><ellipse cx="9" cy="15.800" rx="5" ry="2" fill="#2f3336" /></svg>
            <svg width="20" height="17" viewBox="0 0 20 17"><ellipse cx="10.500" cy="7.800" rx="9" ry="7.500" fill="#fff" /><path d="M3 10 .5 16 8 14Z" fill="#fff" /><path d="M6.500 4 8.300 3 10 5.500 9 7Q10 9 11.800 9.800L13.300 9 15.300 11 13.500 12.800Q7 12.500 6.500 4Z" fill="#1567d4" /></svg>
            <svg width="18" height="18" viewBox="0 0 18 18"><path d="M9 .8 17.500 8.500 13 12.500H5L.5 8.500Z" fill="#4285f4" /><circle cx="9" cy="12.500" r="4.300" fill="#a9c6fb" /></svg>
            <svg width="20" height="16" viewBox="0 0 20 16"><path d="M1.500 3H8.500Q11.500 3 11.500 6V13.500M11.500 7.500H5Q2 7.500 2 10T5 12.700H11.500" fill="none" stroke="#2e9bdb" strokeWidth="2.500" /><path d="M16 3h2.500v2.500h-2.500ZM16 7.300h2.500v2.500h-2.500ZM16 11.600h2.500v2.500h-2.500Z" fill="#58a618" /></svg>
            <svg width="14" height="14" viewBox="0 0 14 14"><path d="M.5 2H13.500M.5 7H13.500M.5 12H13.500" stroke="#2b2f31" strokeWidth="3" strokeLinecap="round" /></svg>
          </Extensions>
        </Toolbar>
        <Bookmarks>
          {BOOKMARKS.map(([label, w, iw, icon], i) => (
            <Bookmark key={i} $w={w}><BookmarkIcon $w={iw}>{icon}</BookmarkIcon>{label}</Bookmark>
          ))}
        </Bookmarks>
      </Chrome>
    </>
  );
}

export default function App() {
  return (
    <Backdrop>
      <GlobalStyle />
      <Window>
        <BrowserChrome />
        <Navbar>
          <Brand><Cube s={19} />ELMR</Brand>
          <Dropdown>Resources <Caret /></Dropdown>
        </Navbar>
        <Main>
          <Tabs>
            <NavTab $w={122} $pad={15}><AreaChart /> Time Series</NavTab>
            <NavTab $w={113} $pad={15} $active><Globe /> Geography</NavTab>
            <NavTab $w={162} $pad={17}><Diamond /> Wealth of Nations</NavTab>
            <NavTab $w={120} $pad={15}><Download /> Export Data</NavTab>
          </Tabs>
          <Controls>
            <Track><Handle /></Track>
            <DateGroup>
              <DateText>Feb 2015</DateText>
              <DateButton><Calendar /></DateButton>
            </DateGroup>
          </Controls>
          <Columns>
            <Panel $w={263} $h={532}>
              <PanelHead>Current Dataset</PanelHead>
              <PanelBody>
                <Select>
                  Unemployment Rate
                  <svg width="8" height="12" viewBox="0 0 8 12" fill="#666"><path d="M4 0 7 4.800H1ZM4 12 1 7.200H7Z" /></svg>
                </Select>
                <Check><CheckMark />Seasonally Adjusted</Check>
                <Check><CheckMark />Percent Change</Check>
                <Button>Change Dataset</Button>
                Select Color Scale
                <Scales>
                  {RAMPS.map((ramp, i) => (
                    <ScaleRow key={i}>
                      <Radio $on={i === 5} />
                      <Ramp>{ramp.map((c) => <Swatch key={c} $c={c} />)}</Ramp>
                    </ScaleRow>
                  ))}
                </Scales>
              </PanelBody>
              <MetaRow><MetaKey>Source</MetaKey>LAUS</MetaRow>
              <MetaRow><MetaKey>Dataset</MetaKey>Unemployment Rate</MetaRow>
            </Panel>
            <Panel $w={847} $h={536}>
              <MapSvg />
              <Legend>
                <LegendBar>{[...T].reverse().map((c) => <LegendCell key={c} $c={c} />)}</LegendBar>
                <LegendLabels>{LEVELS.map((l) => <span key={l}>{l}</span>)}</LegendLabels>
              </Legend>
            </Panel>
          </Columns>
        </Main>
        <Footer>
          <Links><GradCap /><Cubes /><Book /><GithubSquare /><Trello /></Links>
          <span>Copyright © 2015 University of Maryland</span>
        </Footer>
      </Window>
    </Backdrop>
  );
}
